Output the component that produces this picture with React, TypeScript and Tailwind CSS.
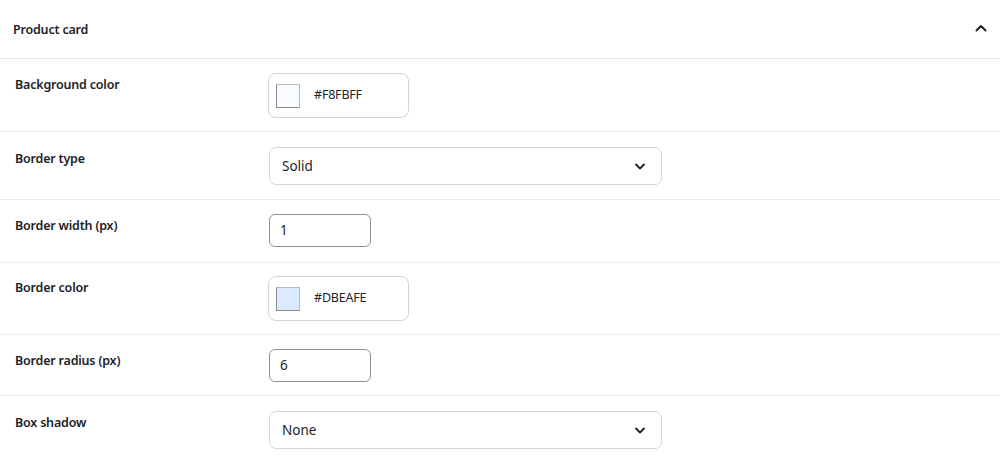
import React from "react";

const font = { fontFamily: '"Noto Sans", "Open Sans", Arial, sans-serif' };

function Chevron({ up = false, className = "" }: { up?: boolean; className?: string }) {
  return (
    <svg width="14" height="14" viewBox="0 0 14 14" className={className} fill="none">
      <path
        d={up ? "M2.5 9.5 L7 5 L11.5 9.5" : "M3 5.5 L7 9.5 L11 5.5"}
        stroke="#1d2327"
        strokeWidth={up ? 2 : 1.8}
        strokeLinecap="round"
        strokeLinejoin="round"
      />
    </svg>
  );
}

function Row({ label, children, cls }: { label: string; children: React.ReactNode; cls: string }) {
  return (
    <div className={`flex border-b border-[#ebebeb] ${cls}`}>
      <div className="w-[268px] shrink-0 pl-[15px] text-[12.5px] font-semibold leading-[20px] tracking-[-0.2px] text-[#1d2327]">
        <div className="pt-[2px]">{label}</div>
      </div>
      <div className="flex-1">{children}</div>
    </div>
  );
}

function ColorBox({ color, value }: { color: string; value: string }) {
  return (
    <div className="flex h-[45px] w-[141px] items-center rounded-[8px] border border-[#d4d4d4] bg-white pl-[7px]">
      <div
        className="h-[24px] w-[24px] border border-t-[#b9b9b9] border-r-[#b9b9b9] border-b-[#8a8a8a] border-l-[#8a8a8a]"
        style={{ backgroundColor: color }}
      />
      <span className="ml-[14px] text-[12.5px] tracking-[-0.2px] text-[#1d2327]">{value}</span>
    </div>
  );
}

function SelectBox({ value }: { value: string }) {
  return (
    <div className="ml-[1px] flex h-[38px] w-[393px] items-center justify-between rounded-[7px] border border-[#d6d6d6] bg-white pl-[12px] pr-[14px]">
      <span className="text-[13.5px] text-[#1d2327]">{value}</span>
      <Chevron />
    </div>
  );
}

function NumBox({ value }: { value: string }) {
  return (
    <div className="ml-[1px] flex h-[33px] w-[102px] items-center rounded-[6px] border border-[#8c8f94] bg-white pl-[10px]">
      <span className="text-[13.5px] text-[#1d2327]">{value}</span>
    </div>
  );
}

export default function App() {
  return (
    <div className="h-[462px] w-[1000px] overflow-hidden bg-white" style={font}>
      <div className="flex h-[59px] items-center justify-between border-b border-[#e6e6e6] pl-[13px] pr-[12px] pt-[2px]">
        <span className="text-[12.5px] font-semibold tracking-[-0.2px] text-[#1d2327]">Product card</span>
        <Chevron up className="-mt-[4px]" />
      </div>
      <Row label="Background color" cls="pt-[14px] pb-[13px]">
        <ColorBox color="#F8FBFF" value="#F8FBFF" />
      </Row>
      <Row label="Border type" cls="pt-[15px] pb-[14px]">
        <SelectBox value="Solid" />
      </Row>
      <Row label="Border width (px)" cls="pt-[14px] pb-[15px]">
        <NumBox value="1" />
      </Row>
      <Row label="Border color" cls="pt-[13px] pb-[13px]">
        <ColorBox color="#DBEAFE" value="#DBEAFE" />
      </Row>
      <Row label="Border radius (px)" cls="pt-[14px] pb-[13px]">
        <NumBox value="6" />
      </Row>
      <Row label="Box shadow" cls="pt-[15px] pb-[14px]">
        <SelectBox value="None" />
      </Row>
    </div>
  );
}
